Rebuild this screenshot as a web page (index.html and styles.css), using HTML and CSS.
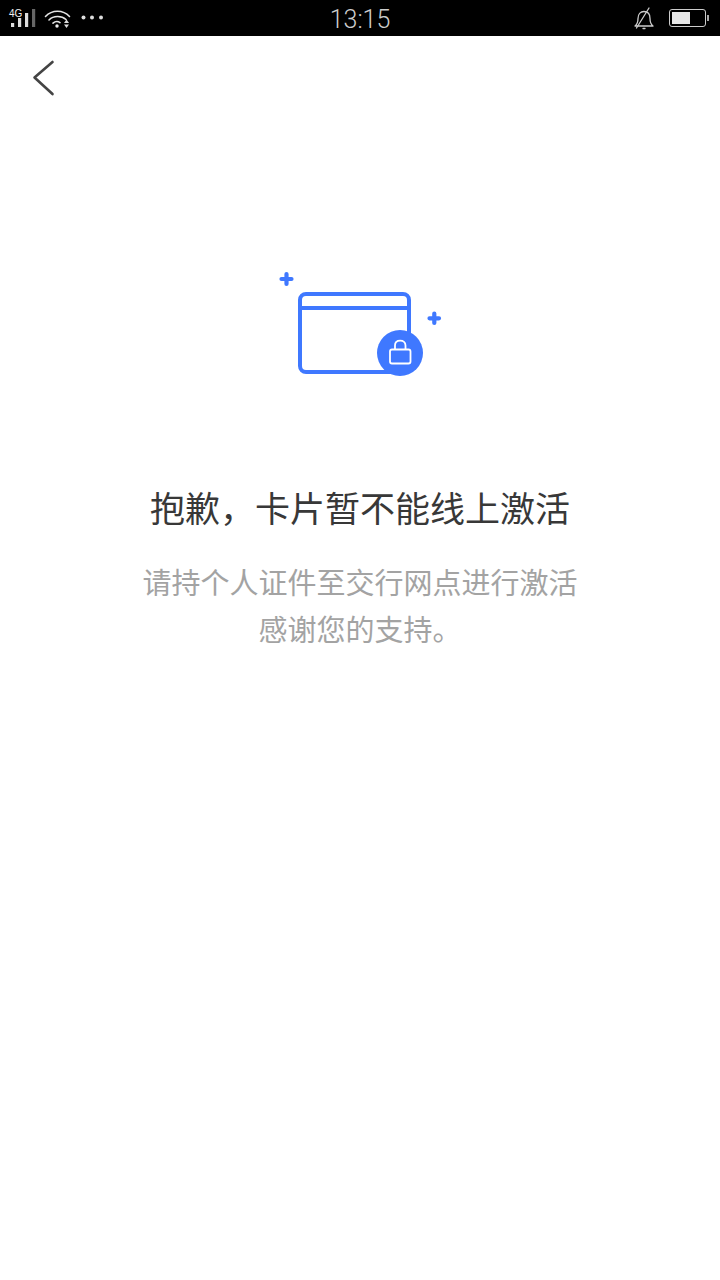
FILE: index.html
```html
<!DOCTYPE html>
<html lang="zh-CN">
<head>
    <meta charset="UTF-8">
    <meta name="viewport" content="width=device-width, initial-scale=1.0">
    <title>卡片激活</title>
    <link rel="stylesheet" href="styles.css">
</head>
<body>
    <div class="status-bar">
        <div class="status-left">
            <svg class="status-icon" width="110" height="36" viewBox="0 0 110 36">
                <text x="9" y="17" class="net-label">4G</text>
                <rect x="11" y="23" width="3.2" height="4" fill="#ddd"/>
                <rect x="18" y="18" width="3.2" height="9" fill="#ddd"/>
                <rect x="25" y="13" width="3.2" height="14" fill="#ddd"/>
                <rect x="32" y="9" width="3.2" height="18" fill="#666"/>
                <g fill="none" stroke="#e4e4e4" stroke-width="1.6" stroke-linecap="round">
                    <path d="M45.5 16.5C52 9.5 63 9.5 69.5 16.5"/>
                    <path d="M49 20C53.5 15.5 61.5 15.5 66 19.5"/>
                    <path d="M53 23.2C55 21.4 58 21.2 60 22.6"/>
                </g>
                <circle cx="57" cy="26" r="1.7" fill="#eee"/>
                <path d="M66.5 19.5L69 23H64Z" fill="#ddd"/>
                <path d="M66.5 28L69 24.5H64Z" fill="#ddd"/>
                <circle cx="83.5" cy="17.5" r="2" fill="#ddd"/>
                <circle cx="92" cy="17.5" r="2" fill="#ddd"/>
                <circle cx="101" cy="17.5" r="2" fill="#ddd"/>
            </svg>
        </div>
        <div class="status-time">13:15</div>
        <div class="status-right">
            <svg class="status-icon" width="22" height="24" viewBox="0 0 22 24">
                <g fill="none" stroke="#ccc" stroke-width="1.3" stroke-linecap="round" stroke-linejoin="round">
                    <path d="M2 20C4.5 18 5 15.5 5 12.5C5 8 7.5 5.5 11 5.5C14.5 5.5 17 8 17 12.5C17 15.5 17.5 18 20 20Z"/>
                    <path d="M3.5 22L16 2"/>
                    <path d="M10 22.5H12"/>
                </g>
            </svg>
            <div class="battery">
                <div class="battery-level"></div>
            </div>
            <div class="battery-tip"></div>
        </div>
    </div>

    <div class="nav-bar">
        <svg width="24" height="38" viewBox="0 0 24 38">
            <path d="M20.5 3L2.5 18.5L20.5 35" fill="none" stroke="#444" stroke-width="2.6" stroke-linecap="round" stroke-linejoin="round"/>
        </svg>
    </div>

    <div class="content">
        <svg class="card-icon" width="180" height="125" viewBox="0 0 180 125">
            <g fill="none" stroke="#3f78ff">
                <rect x="30" y="34" width="109" height="78" rx="6" stroke-width="4"/>
                <path d="M30 48H139" stroke-width="4"/>
                <path d="M11.5 19H21.5M16.5 14V24" stroke-width="4.2" stroke-linecap="round"/>
                <path d="M159.5 58.3H169M164.3 53.5V63" stroke-width="4.2" stroke-linecap="round"/>
            </g>
            <circle cx="130" cy="93" r="23" fill="#3f78ff"/>
            <g fill="none" stroke="#fff" stroke-width="1.8">
                <rect x="120" y="89.5" width="20.5" height="14" rx="2"/>
                <path d="M125 89.5V85.5C125 82.5 127.2 80.7 130.2 80.7C133.2 80.7 135.5 82.5 135.5 85.5V89.5"/>
            </g>
        </svg>
        <h2 class="title">抱歉&#xFF0C;卡片暂不能线上激活</h2>
        <p class="desc">请持个人证件至交行网点进行激活<br>感谢您的支持。</p>
    </div>
</body>
</html>
```
FILE: styles.css
```css
body {
    font-family: "Noto Sans CJK SC", "Liberation Sans", sans-serif;
    background-color: #fff;
    margin: 0;
    padding: 0;
}

.status-bar {
    display: grid;
    grid-template-columns: 1fr auto 1fr;
    align-items: center;
    height: 36px;
    background-color: #000;
}

.status-icon {
    display: block;
}

.status-left {
    display: flex;
}

.net-label {
    font-family: "Liberation Sans", sans-serif;
    font-size: 10px;
    fill: #eee;
}

.status-time {
    padding-top: 3px;
    font-family: Roboto, sans-serif;
    font-size: 25px;
    font-weight: 300;
    color: #ccc;
}

.status-right {
    display: flex;
    align-items: center;
    justify-content: flex-end;
    padding-right: 11px;
}

.battery {
    box-sizing: border-box;
    width: 37px;
    height: 18px;
    margin-left: 14px;
    padding: 2px;
    border: 1px solid #ccc;
    border-radius: 3px;
}

.battery-level {
    width: 18px;
    height: 100%;
    background-color: #e6e6e6;
}

.battery-tip {
    width: 2px;
    height: 6px;
    margin-left: 1px;
    background-color: #aaa;
}

.nav-bar {
    height: 76px;
    padding: 23px 0 0 32px;
    box-sizing: border-box;
}

.content {
    display: flex;
    flex-direction: column;
    align-items: center;
    padding-top: 148px;
}

.card-icon {
    display: block;
}

.title {
    margin: 92px 0 0;
    font-size: 35px;
    font-weight: 400;
    line-height: 60px;
    color: #383838;
}

.desc {
    margin: 21px 0 0;
    font-size: 29px;
    line-height: 47px;
    color: #a3a3a3;
    text-align: center;
}
```
